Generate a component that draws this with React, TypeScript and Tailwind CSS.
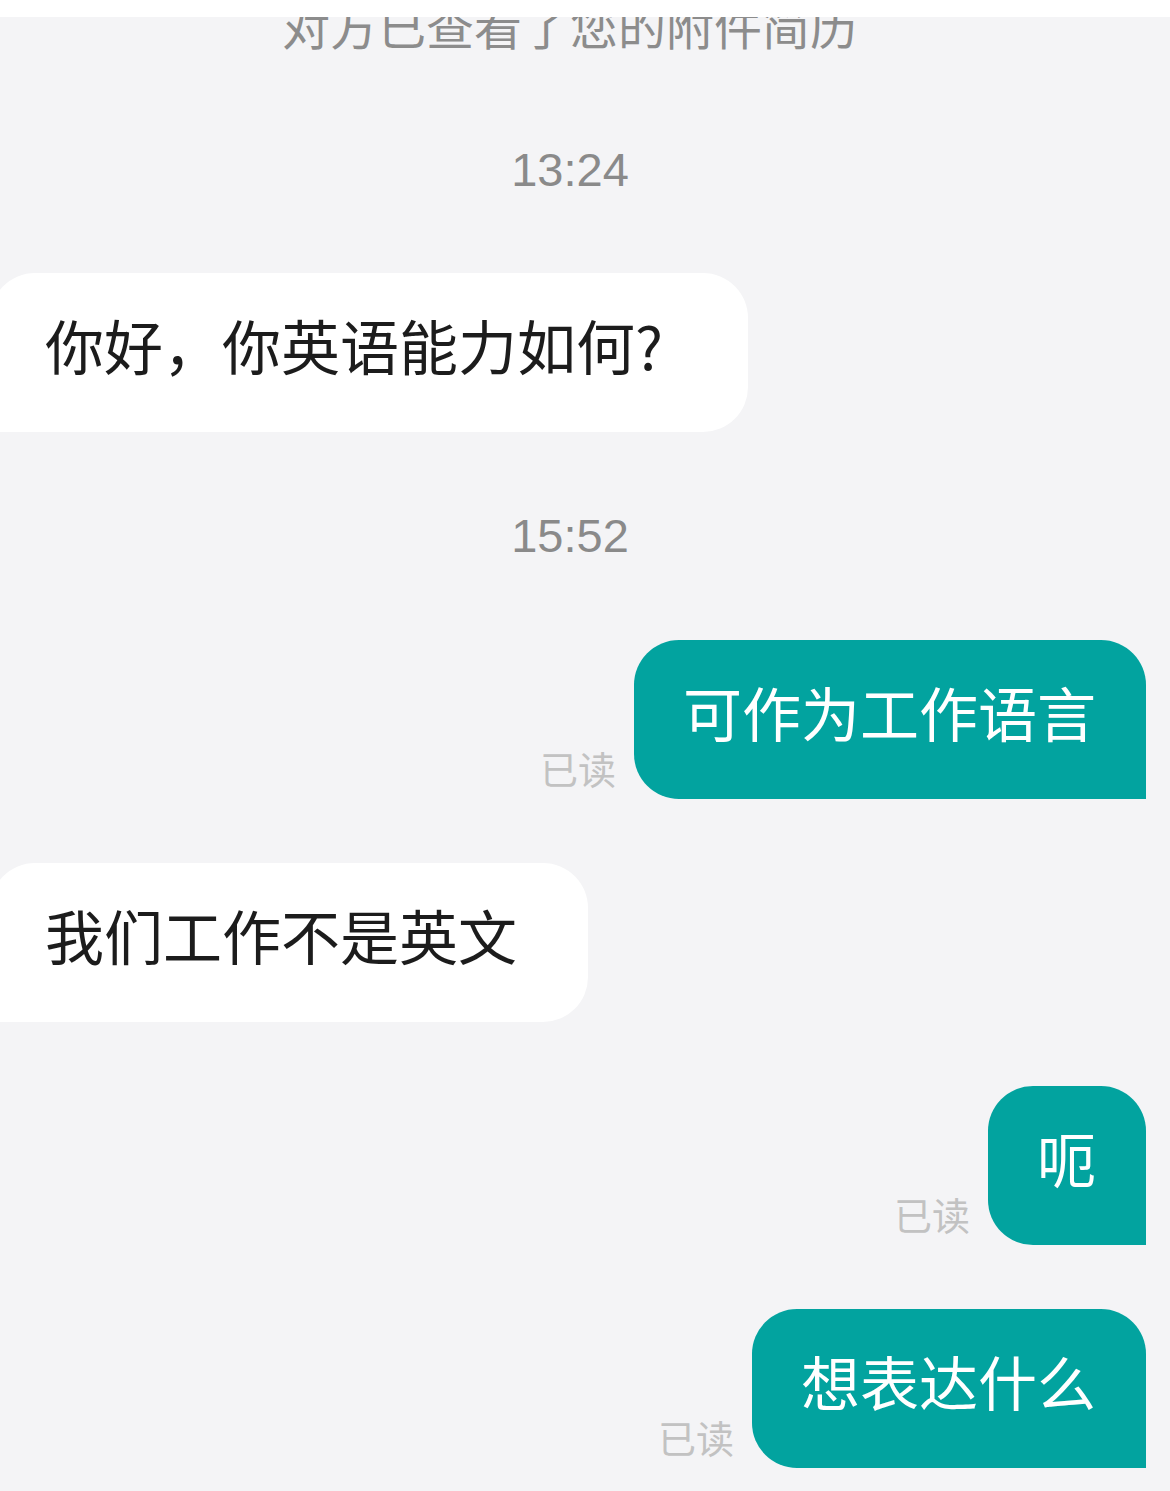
import React from "react";

const cjk = { fontFamily: '"Noto Sans CJK SC", "Noto Sans", sans-serif' };
const latin = { fontFamily: '"Liberation Sans", Arial, sans-serif' };

function Time({ t, className }: { t: string; className: string }) {
  return (
    <div
      className={`pr-[30px] text-center text-[47px] leading-[47px] text-[#8a8a8a] ${className}`}
      style={latin}
    >
      {t}
    </div>
  );
}

function Received({ text, w, className }: { text: string; w: string; className: string }) {
  return (
    <div className={`flex ${className}`}>
      <div
        className={`-ml-[10px] ${w} rounded-tl-[45px] rounded-tr-[45px] rounded-br-[45px] rounded-bl-none bg-white pl-[55px] pt-[42px] pb-[58px] text-[59px] leading-[59px] text-[#1c1c1c] whitespace-nowrap`}
        style={cjk}
      >
        {text}
      </div>
    </div>
  );
}

function Sent({ text, className }: { text: string; className: string }) {
  return (
    <div className={`flex items-end justify-end gap-[18px] pr-[24px] ${className}`}>
      <div
        className="mb-[12px] text-[38px] leading-[38px] text-[#c2c2c2]"
        style={cjk}
      >
        已读
      </div>
      <div
        className="rounded-tl-[45px] rounded-tr-[45px] rounded-bl-[45px] rounded-br-none bg-[#02a39f] pl-[49px] pr-[50px] pt-[42px] pb-[58px] text-[59px] leading-[59px] text-white whitespace-nowrap"
        style={cjk}
      >
        {text}
      </div>
    </div>
  );
}

export default function App() {
  return (
    <div className="w-[1170px] h-[1491px] overflow-hidden bg-[#f4f4f6] flex flex-col">
      <div className="h-[17px] bg-white shrink-0" />
      <div className="h-[34px] overflow-hidden shrink-0">
        <div
          className="-mt-[17px] pr-[30px] text-center text-[48px] leading-[48px] text-[#8c8c8c] whitespace-nowrap"
          style={cjk}
        >
          对方已查看了您的附件简历
        </div>
      </div>
      <Time t="13:24" className="mt-[95px]" />
      <Received text="你好，你英语能力如何?" w="w-[758px]" className="mt-[80px]" />
      <Time t="15:52" className="mt-[80px]" />
      <Sent text="可作为工作语言" className="mt-[81px]" />
      <Received text="我们工作不是英文" w="w-[598px]" className="mt-[64px]" />
      <Sent text="呃" className="mt-[64px]" />
      <Sent text="想表达什么" className="mt-[64px]" />
    </div>
  );
}
